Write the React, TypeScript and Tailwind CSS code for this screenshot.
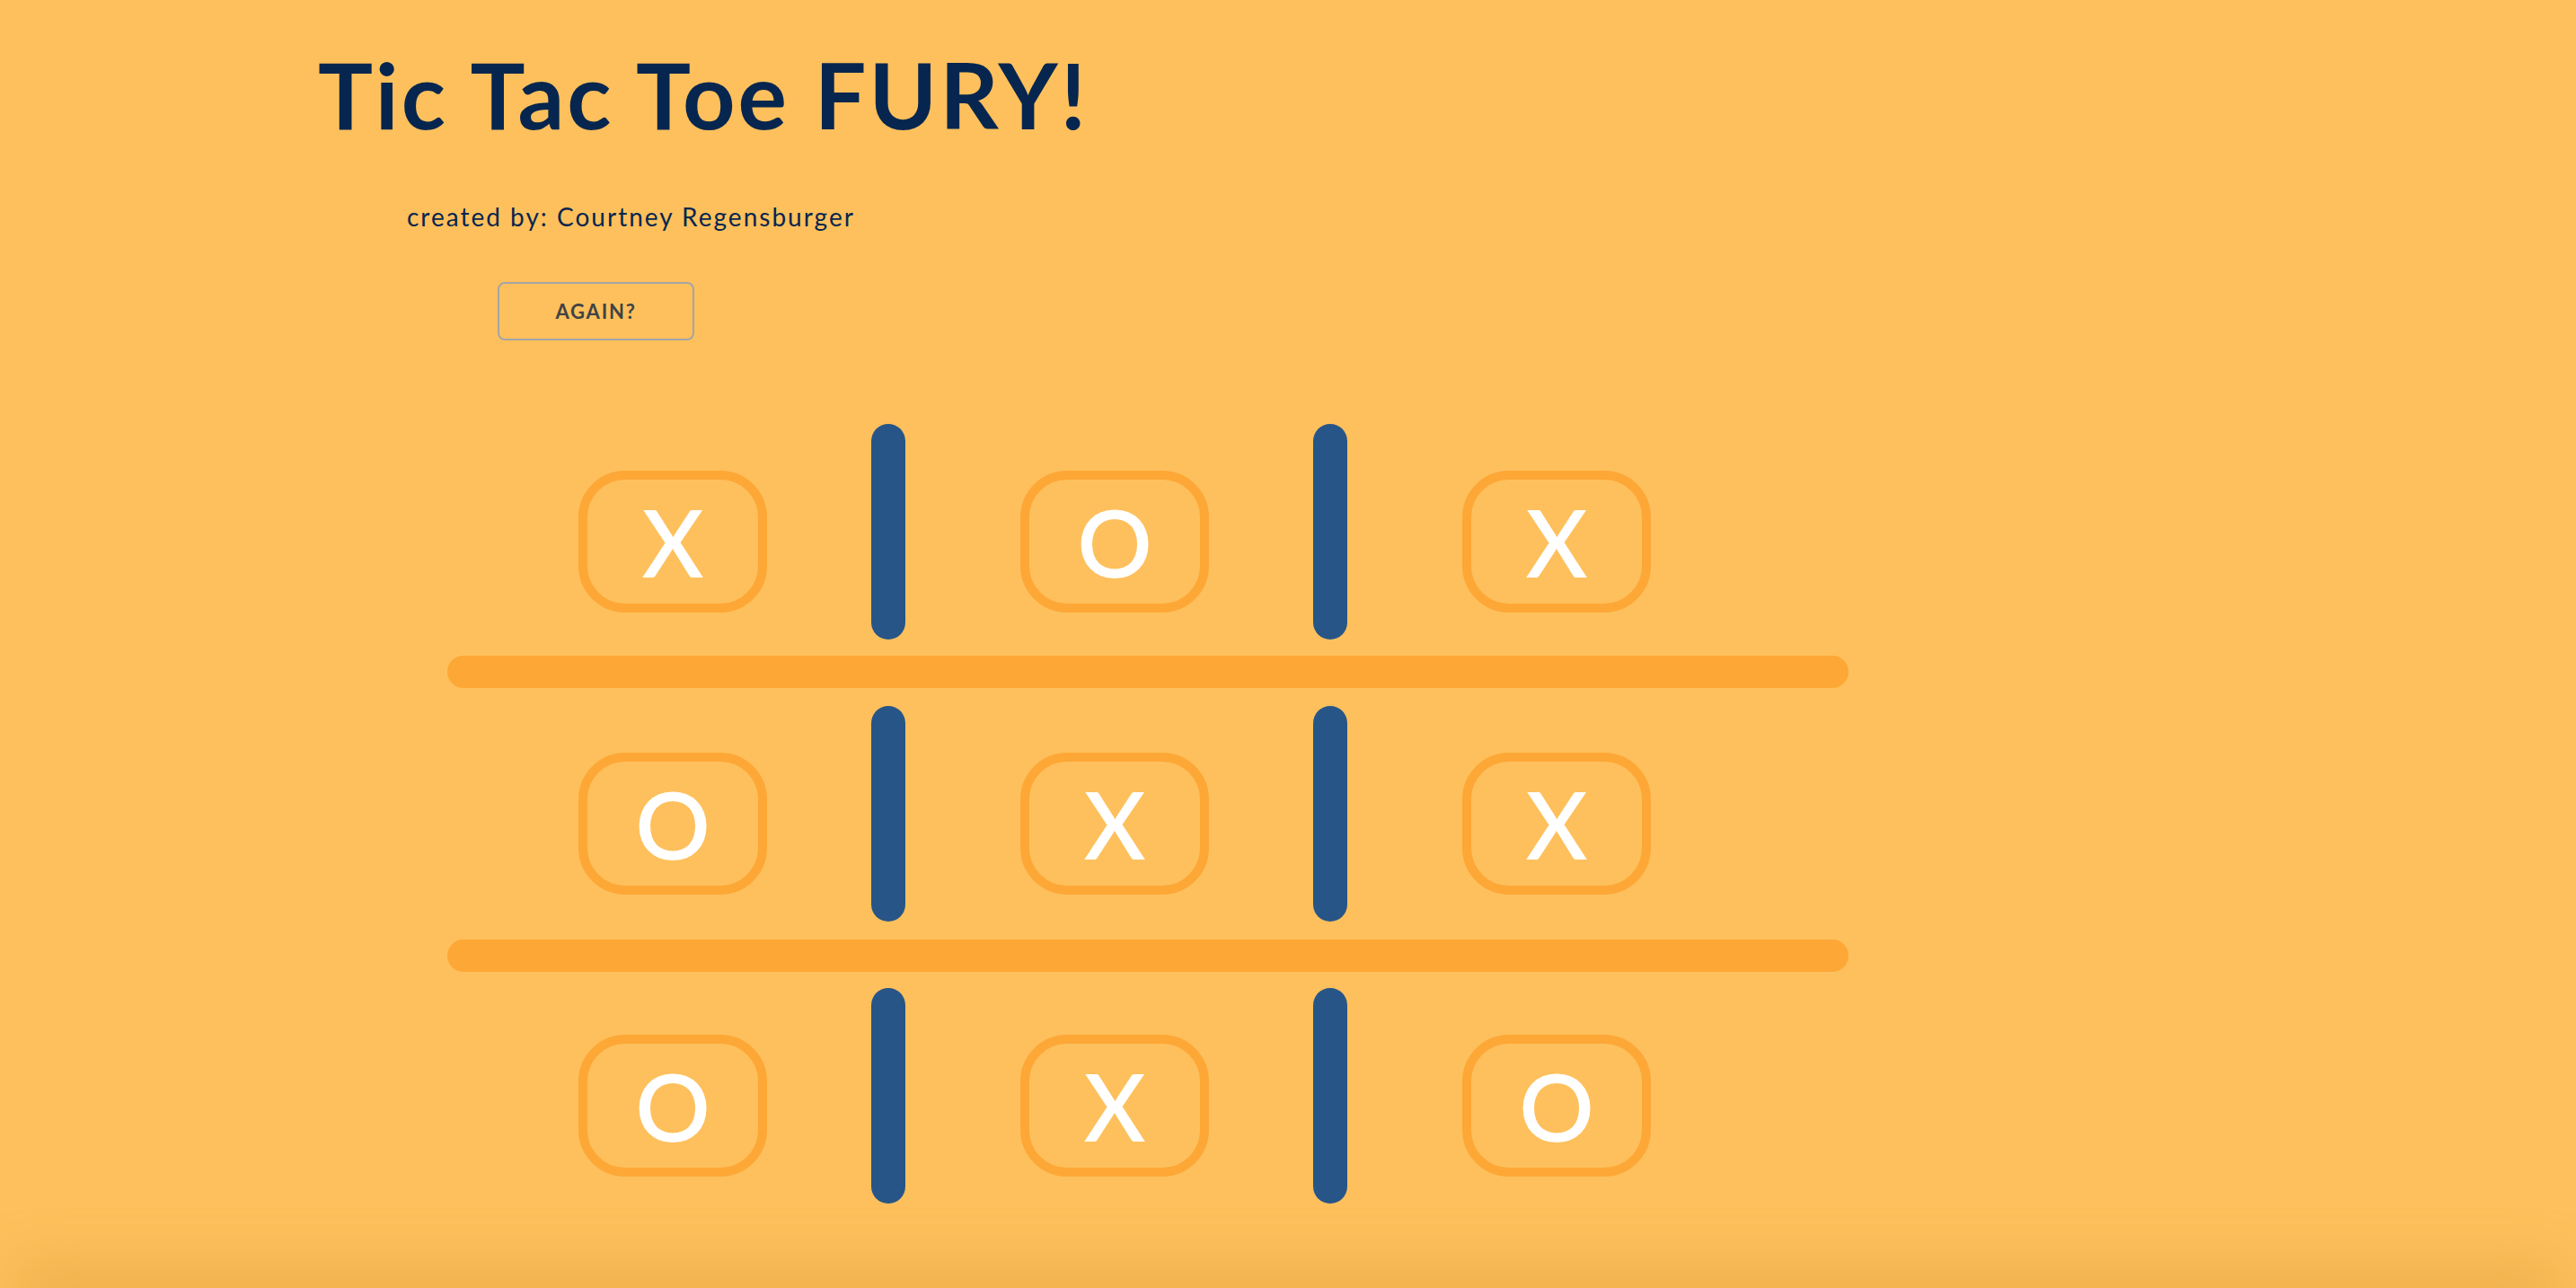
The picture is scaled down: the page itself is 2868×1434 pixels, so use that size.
const board = [
  ['X', 'O', 'X'],
  ['O', 'X', 'X'],
  ['O', 'X', 'O'],
]

const Cell = ({ mark, first }: { mark: string; first?: boolean }) => {
  return (
    <div
      className={`${first ? '' : 'ml-[128px]'} mt-[52px] flex h-[158px] w-[210px] items-center justify-center rounded-[52px] border-[10px] border-[#fda737]`}
    >
      <span className="text-[104px] font-semibold leading-none text-white">
        {mark}
      </span>
    </div>
  )
}

const VBar = () => (
  <div className="ml-[116px] h-[240px] w-[38px] rounded-full bg-[#285587]" />
)

const Row = ({ marks }: { marks: string[] }) => {
  return (
    <div className="flex items-start pl-[146px]">
      <Cell mark={marks[0]} first />
      <VBar />
      <Cell mark={marks[1]} />
      <VBar />
      <Cell mark={marks[2]} />
    </div>
  )
}

export default function App() {
  return (
    <div
      className="relative flex h-[1434px] w-full flex-col overflow-hidden bg-[#fec05c]"
      style={{ fontFamily: 'Lato, "Noto Sans", sans-serif' }}
    >
      <h1 className="ml-[354px] mt-[54px] text-[102px] font-bold leading-none tracking-[3px] text-[#07264f]">
        Tic Tac Toe FURY!
      </h1>
      <p className="ml-[453px] mt-[71px] text-[28px] leading-none tracking-[2px] text-[#07264f]">
        created by: Courtney Regensburger
      </p>
      <div className="ml-[554px] mt-[59px]">
        <button className="h-[65px] w-[219px] rounded-[8px] border-2 border-[#a3a5a7] text-[22px] font-bold tracking-[0.08em] text-[#404346]">
          AGAIN?
        </button>
      </div>

      <div className="ml-[498px] mt-[93px] flex w-[1560px] flex-col">
        <Row marks={board[0]} />
        <div className="mb-[20px] mt-[18px] h-[36px] w-full rounded-full bg-[#fda737]" />
        <Row marks={board[1]} />
        <div className="mb-[18px] mt-[20px] h-[36px] w-full rounded-full bg-[#fda737]" />
        <Row marks={board[2]} />
      </div>

      <div className="mx-[40px] mt-auto h-0 shadow-[0_0_60px_24px_rgba(214,150,50,0.45)]" />
    </div>
  )
}
